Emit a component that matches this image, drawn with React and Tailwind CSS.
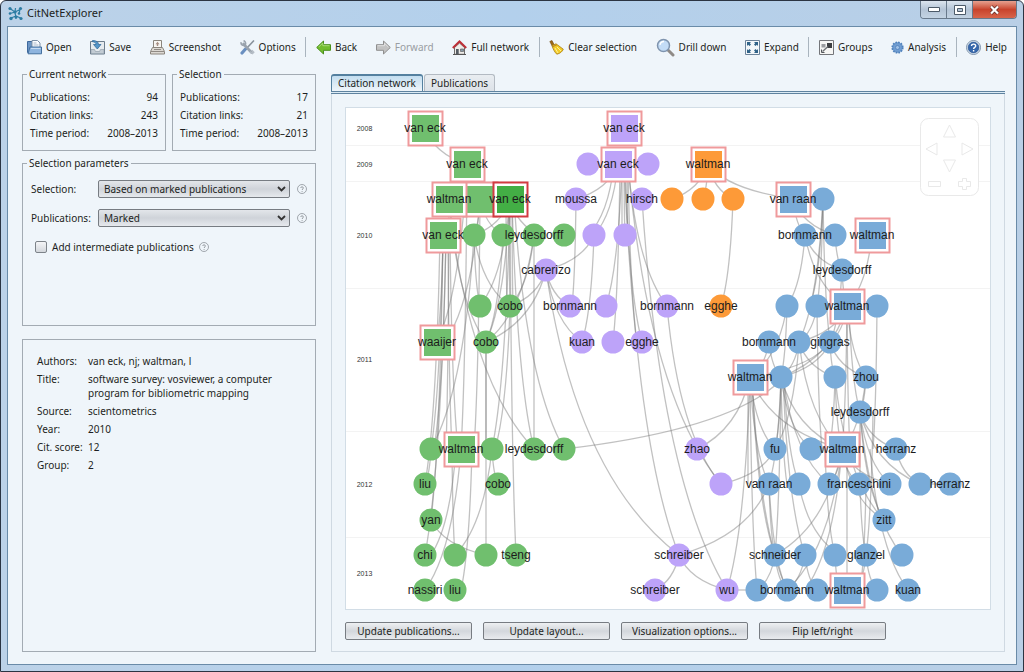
import { useState } from 'react'

const GREEN = '#70bf6e'
const PURPLE = '#bda3f9'
const ORANGE = '#fd9a38'
const BLUE = '#79abd8'

// x, y, color, label
const CIRCLES = [
  [474, 235, GREEN], [503, 235, GREEN], [534, 235, GREEN, 'leydesdorff'], [564, 235, GREEN],
  [480, 306, GREEN], [510, 306, GREEN, 'cobo'], [486, 342, GREEN, 'cobo'],
  [431, 449, GREEN], [492, 449, GREEN], [534, 449, GREEN, 'leydesdorff'], [564, 449, GREEN],
  [425, 484, GREEN, 'liu'], [498, 484, GREEN, 'cobo'], [431, 520, GREEN, 'yan'],
  [425, 555, GREEN, 'chi'], [455, 555, GREEN], [486, 555, GREEN], [516, 555, GREEN, 'tseng'],
  [425, 590, GREEN, 'nassiri'], [455, 590, GREEN, 'liu'],
  [588, 164, PURPLE], [648, 164, PURPLE], [576, 199, PURPLE, 'moussa'], [642, 199, PURPLE, 'hirsch'],
  [594, 235, PURPLE], [625, 235, PURPLE], [546, 270, PURPLE, 'cabrerizo'],
  [570, 306, PURPLE, 'bornmann'], [606, 306, PURPLE], [667, 306, PURPLE, 'bornmann'],
  [582, 342, PURPLE, 'kuan'], [613, 342, PURPLE], [642, 342, PURPLE, 'egghe'],
  [697, 449, PURPLE, 'zhao'], [721, 484, PURPLE], [679, 555, PURPLE, 'schreiber'],
  [655, 590, PURPLE, 'schreiber'], [727, 590, PURPLE, 'wu'],
  [672, 199, ORANGE], [703, 199, ORANGE], [733, 199, ORANGE], [721, 306, ORANGE, 'egghe'],
  [823, 199, BLUE], [805, 235, BLUE, 'bornmann'], [835, 235, BLUE], [842, 270, BLUE, 'leydesdorff'],
  [787, 306, BLUE], [817, 306, BLUE], [877, 306, BLUE],
  [769, 342, BLUE, 'bornmann'], [799, 342, BLUE], [830, 342, BLUE, 'gingras'],
  [781, 377, BLUE], [835, 377, BLUE], [866, 377, BLUE, 'zhou'], [860, 412, BLUE, 'leydesdorff'],
  [775, 449, BLUE, 'fu'], [811, 449, BLUE], [896, 449, BLUE, 'herranz'],
  [769, 484, BLUE, 'van raan'], [799, 484, BLUE], [829, 484, BLUE], [859, 484, BLUE, 'franceschini'],
  [890, 484, BLUE], [920, 484, BLUE], [950, 484, BLUE, 'herranz'], [884, 520, BLUE, 'zitt'],
  [775, 555, BLUE, 'schneider'], [805, 555, BLUE], [835, 555, BLUE], [866, 555, BLUE, 'glanzel'],
  [902, 555, BLUE], [757, 590, BLUE], [787, 590, BLUE, 'bornmann'], [817, 590, BLUE],
  [877, 590, BLUE], [908, 590, BLUE, 'kuan'],
]

// marked publications are drawn as framed squares
const SQUARES = [
  [425, 128, GREEN, 'van eck'], [467, 164, GREEN, 'van eck'], [480, 199, GREEN],
  [449, 199, GREEN, 'waltman'], [443, 235, GREEN, 'van eck'],
  [437, 342, GREEN, 'waaijer'], [461, 449, GREEN, 'waltman'],
  [624, 128, PURPLE, 'van eck'], [618, 164, PURPLE, 'van eck'],
  [708, 164, ORANGE, 'waltman'],
  [793, 199, BLUE, 'van raan'], [872, 235, BLUE, 'waltman'], [847, 306, BLUE, 'waltman'],
  [750, 377, BLUE, 'waltman'], [842, 449, BLUE, 'waltman'], [847, 590, BLUE, 'waltman'],
]

const EDGES = [
  [425, 128, 467, 164],
  [480, 199, 474, 235], [480, 199, 503, 235], [510, 199, 474, 235], [510, 199, 540, 235],
  [443, 235, 437, 342], [443, 235, 431, 449], [446, 235, 434, 449], [448, 235, 452, 449],
  [450, 235, 458, 449], [440, 235, 425, 484], [443, 235, 431, 520], [446, 235, 425, 555],
  [449, 199, 534, 449], [467, 164, 437, 342], [480, 199, 445, 342],
  [467, 164, 461, 449], [449, 199, 486, 342], [474, 235, 431, 449],
  [474, 235, 480, 306], [474, 235, 510, 306], [480, 199, 474, 449], [510, 199, 480, 306],
  [506, 199, 507, 306], [509, 199, 510, 306], [512, 199, 513, 306], [510, 199, 486, 342],
  [503, 235, 486, 342], [534, 235, 510, 306], [534, 235, 486, 342], [534, 235, 534, 449],
  [546, 270, 510, 306], [546, 270, 486, 342], [512, 199, 534, 449], [514, 199, 564, 449],
  [510, 199, 492, 449], [510, 199, 516, 555], [510, 306, 495, 449],
  [486, 342, 486, 449], [486, 342, 486, 555], [461, 449, 425, 590], [452, 449, 455, 555],
  [472, 449, 461, 590], [456, 449, 431, 555], [492, 449, 498, 484], [492, 449, 455, 555],
  [431, 449, 425, 484], [431, 520, 486, 555], [449, 199, 446, 449],
  [618, 164, 576, 199], [618, 164, 594, 235], [614, 164, 588, 235], [624, 164, 625, 235],
  [622, 164, 622, 235], [627, 164, 628, 235], [622, 164, 606, 306], [620, 164, 613, 342],
  [628, 164, 637, 342], [625, 164, 642, 342], [628, 164, 667, 306], [628, 164, 721, 484],
  [624, 164, 679, 555], [642, 199, 727, 590], [667, 306, 721, 484], [576, 199, 572, 306],
  [594, 235, 582, 342], [594, 235, 546, 270], [546, 270, 570, 306], [546, 270, 582, 342],
  [546, 270, 679, 555], [679, 555, 655, 590], [679, 555, 727, 590],
  [708, 164, 672, 199], [708, 164, 703, 199], [708, 164, 733, 199], [708, 164, 793, 199],
  [733, 199, 721, 306],
  [793, 199, 805, 235], [793, 199, 835, 235], [823, 199, 817, 306],
  [823, 199, 810, 306], [823, 199, 830, 342], [823, 199, 799, 342],
  [835, 235, 842, 270], [805, 235, 787, 306], [805, 235, 842, 270], [805, 235, 847, 306],
  [872, 235, 847, 306], [842, 270, 847, 306], [842, 270, 830, 342],
  [787, 306, 781, 377], [787, 306, 750, 377], [817, 306, 799, 342],
  [817, 306, 822, 449], [847, 306, 830, 342], [847, 306, 799, 342],
  [847, 306, 781, 377], [847, 306, 842, 449], [847, 306, 850, 449], [849, 306, 860, 412],
  [847, 306, 866, 377], [877, 306, 873, 449], [769, 342, 750, 377], [769, 342, 781, 377],
  [799, 342, 781, 377], [799, 342, 835, 377], [799, 342, 842, 449], [799, 342, 775, 449],
  [830, 342, 750, 377], [830, 342, 781, 377], [830, 342, 835, 377], [830, 342, 866, 377],
  [835, 377, 842, 449], [835, 377, 829, 449], [835, 377, 884, 520], [866, 377, 860, 412],
  [866, 377, 842, 449], [860, 412, 860, 484], [860, 412, 884, 520], [860, 412, 896, 449],
  [860, 412, 890, 484], [860, 412, 920, 484], [860, 412, 902, 555],
  [873, 412, 866, 555], [870, 449, 908, 590],
  [750, 377, 697, 449], [750, 377, 727, 590], [750, 377, 757, 590], [752, 377, 787, 590],
  [748, 377, 748, 484], [752, 377, 775, 555], [750, 377, 769, 484], [750, 377, 842, 449],
  [750, 377, 775, 449], [781, 377, 775, 449], [781, 377, 769, 484], [784, 377, 799, 484],
  [781, 377, 811, 449], [783, 377, 829, 484], [781, 377, 842, 449], [781, 377, 775, 555],
  [783, 377, 805, 555], [781, 377, 787, 484], [775, 449, 721, 484],
  [769, 484, 679, 555], [799, 484, 840, 555], [842, 449, 829, 484], [842, 449, 859, 484],
  [842, 449, 775, 555], [842, 449, 787, 590], [842, 449, 805, 590], [825, 449, 835, 555],
  [847, 449, 847, 590], [842, 449, 884, 520], [860, 484, 866, 555], [866, 484, 860, 590],
  [842, 449, 890, 484], [896, 449, 920, 484], [769, 484, 775, 555], [769, 484, 787, 590],
  [775, 555, 757, 590], [775, 555, 787, 590], [805, 555, 817, 590], [805, 555, 787, 590],
  [835, 555, 840, 590], [866, 555, 877, 590], [866, 555, 855, 590], [757, 590, 727, 590],
  [920, 484, 950, 484], [784, 377, 564, 449],
]

const YEARS = [[128, '2008'], [164, '2009'], [235, '2010'], [359, '2011'], [484, '2012'], [573, '2013']]

function edgePath([x1, y1, x2, y2]) {
  const dx = x2 - x1
  const dy = y2 - y1
  return `M${x1} ${y1}Q${x1 + dx * 0.22} ${y1 + dy * 0.72} ${x2} ${y2}`
}

function Node({ x, y, color, square, selected }) {
  if (!square) return <circle cx={x} cy={y} r="11.5" fill={color} />
  return (
    <g>
      <rect x={x - 16.5} y={y - 16.5} width="34" height="34" fill="#fff" stroke={selected ? '#d23b42' : '#ef9a9c'} strokeWidth="2" />
      <rect x={x - 13} y={y - 13} width="27" height="27" fill={color} />
    </g>
  )
}

function Label({ x, y, text }) {
  return (
    <text x={x} y={y + 4} textAnchor="middle" fontSize="12" fill="#1c1c1c">{text}</text>
  )
}

function CitationMap() {
  const nodes = [...CIRCLES, ...SQUARES, [510, 199, '#43ae45', 'van eck']]
  return (
    <svg viewBox="346 108 644 501" className="block w-full font-['Liberation_Sans',Arial,sans-serif]" role="img" aria-label="Citation network">
      {[145, 181, 288, 431, 537].map((y) => (
        <path key={y} d={`M346 ${y}.5H990`} stroke="#f3f3f3" />
      ))}
      {YEARS.map(([y, year]) => (
        <text key={year} x="364.5" y={y + 3} textAnchor="middle" fontSize="7" fill="#333">{year}</text>
      ))}
      <g fill="none" stroke="#777" strokeOpacity="0.46" strokeWidth="1.3">
        {EDGES.map((edge) => <path key={edge.join()} d={edgePath(edge)} />)}
      </g>
      {CIRCLES.map(([x, y, color]) => <Node key={`${x},${y}`} x={x} y={y} color={color} />)}
      {SQUARES.map(([x, y, color]) => <Node key={`${x},${y}`} x={x} y={y} color={color} square />)}
      <Node x={510} y={199} color="#43ae45" square selected />
      {nodes.filter((n) => n[3]).map(([x, y, , label]) => <Label key={`${x},${y}`} x={x} y={y} text={label} />)}
      <g fill="#fff" stroke="#e9e9e9">
        <rect x="920.5" y="118.5" width="58" height="77" rx="8" />
        <path d="M949.5 125l6 12h-12zM949.5 172l6-12h-12zM926 149l11-6v12zM973 149l-11-6v12z" />
        <path d="M928.5 181.5h12v5h-12zM962.5 178.5h4v3h4v5h-4v3h-4v-3h-4v-5h4z" />
      </g>
    </svg>
  )
}

/* ---- toolbar icons ---- */

function OpenIcon() {
  return (
    <svg width="15" height="15" viewBox="0 0 15 15">
      <path d="M.5 12.5V1.5h5l1 1.5h2v9.5z" fill="#6b94c4" stroke="#3d689c" />
      <path d="M5 .5h5.500l2.500 2.500v7H5z" fill="#fafcff" stroke="#7d8fa5" />
      <path d="M6.5 3h3M6.5 5h5" stroke="#aab8c8" />
      <path d="M1 13.800L3 7h11.500v6.800z" fill="#8eb4de" stroke="#44709f" />
      <path d="M4 8.500h9.500" stroke="#c8dcf2" />
    </svg>
  )
}

function SaveIcon() {
  return (
    <svg width="15" height="15" viewBox="0 0 15 15">
      <path d="M.5 1.5h14v12.500H.5z" fill="#e6ebef" stroke="#6d7d8c" />
      <path d="M1 9.500h3.500l1 2h4l1-2H14V13.500H1z" fill="#c3ccd4" stroke="#8a98a5" strokeWidth=".6" />
      <path d="M2.500.5C6 .5 8.500 1.800 8.500 4.500H11L7.300 9 3.500 4.500H6C6 2.800 4.800 1.900 2.500 1.700z" fill="#5596c8" stroke="#2b6496" strokeWidth=".7" />
    </svg>
  )
}

function ScreenshotIcon() {
  return (
    <svg width="15" height="15" viewBox="0 0 15 15">
      <path d="M3.500.5h8v8h-8z" fill="#f8f6f2" stroke="#8b857d" />
      <path d="M7.500 1.800l2 2.500H8.200V6H6.800V4.300H5.500z" fill="#a68e83" />
      <path d="M2.500 7.500h10l2 4v2.500H.5v-2.500z" fill="#ddd9d3" stroke="#8b857d" />
      <path d="M1 11.500h13M4 9.500h7" stroke="#908a84" />
    </svg>
  )
}

function OptionsIcon() {
  return (
    <svg width="15" height="15" viewBox="0 0 15 15" fill="none" strokeLinecap="round">
      <path d="M13.500 1L6 9" stroke="#8a939d" strokeWidth="1.700" />
      <path d="M5.500 9L2 13" stroke="#6a8fc0" strokeWidth="3.200" />
      <path d="M3.500 4L11.500 12.500" stroke="#9aa3ad" strokeWidth="2.600" />
      <path d="M1 2.800C1 5 3 6 4.800 5.200 6 4 5.800 2 4.200 1" stroke="#9aa3ad" strokeWidth="1.700" />
      <path d="M10.500 12l2 1.500 1.200-1.200L12 10.500" stroke="#b5bdc6" strokeWidth="1.500" />
    </svg>
  )
}

function BackIcon() {
  return (
    <svg width="15" height="15" viewBox="0 0 15 15">
      <path d="M.7 7.500L7.500 1v3.700h7v5.600h-7V14z" fill="#72bd2e" stroke="#4a8f1c" strokeLinejoin="round" />
      <path d="M2.800 7L6.800 3v2.700h6.700" fill="none" stroke="#aede7a" strokeWidth=".9" />
    </svg>
  )
}

function ForwardIcon() {
  return (
    <svg width="15" height="15" viewBox="0 0 15 15">
      <path d="M14.300 7.500L7.500 1v3.700h-7v5.600h7V14z" fill="#c2c2c2" stroke="#8f8f8f" strokeLinejoin="round" />
      <path d="M1.500 5.700h7V3.300l3.800 3.700" fill="none" stroke="#e4e4e4" strokeWidth=".9" />
    </svg>
  )
}

function HomeIcon() {
  return (
    <svg width="15" height="15" viewBox="0 0 15 15">
      <path d="M2.500 7.500l5-4.500 5 4.500v6.800h-10z" fill="#eeece8" stroke="#6b6b6b" />
      <path d="M.8 8l6.700-6.500L14.200 8" fill="none" stroke="#bd3038" strokeWidth="2" />
      <path d="M4 9h2.700v5H4z" fill="#555c63" />
      <path d="M8.500 9h3v2.500h-3z" fill="#8799a8" stroke="#555" strokeWidth=".6" />
      <path d="M1 14.500h13" stroke="#555" />
    </svg>
  )
}

function BroomIcon() {
  return (
    <svg width="15" height="15" viewBox="0 0 15 15">
      <path d="M.8 1.500L3 .5l2.500 5-2 1.200z" fill="#a06b18" stroke="#6d4813" strokeWidth=".6" />
      <path d="M3 5.500L7 3.800l7.300 5.400c-1 2.500-3.300 4.300-6.500 5C5.500 12 4 9 3 5.500z" fill="#f3cd26" stroke="#a87b12" strokeWidth=".8" />
      <path d="M3.500 6.800l4.300-2" stroke="#b6892a" strokeWidth="1.200" />
      <path d="M6 8l3 5M8 7l4 4" stroke="#fff09a" strokeWidth="1" />
    </svg>
  )
}

function DrillIcon() {
  return (
    <svg width="19" height="19" viewBox="0 0 19 19">
      <path d="M12 12l5 5" stroke="#8f8a86" strokeWidth="3" strokeLinecap="round" />
      <circle cx="7.500" cy="7.500" r="6" fill="#c3dcf6" stroke="#7f94ae" strokeWidth="1.500" />
      <path d="M4 7a4 4 0 014-3.500" fill="none" stroke="#fff" strokeWidth="1.300" />
    </svg>
  )
}

function ExpandIcon() {
  return (
    <svg width="15" height="15" viewBox="0 0 15 15">
      <path d="M.5.5h14v14H.5z" fill="#f3f7fa" stroke="#6c839a" />
      <path d="M2 2h4L4.800 3.200 6 4.500 4.500 6 3.200 4.800 2 6zM13 2v4l-1.200-1.200L10.500 6 9 4.500l1.200-1.300L9 2zM2 13V9l1.200 1.200L4.500 9 6 10.500l-1.200 1.300L6 13zM13 13H9l1.200-1.200L9 10.500 10.500 9l1.300 1.200L13 9z" fill="#2f6288" />
    </svg>
  )
}

function GroupsIcon() {
  return (
    <svg width="15" height="15" viewBox="0 0 15 15">
      <path d="M.5.5h14v14H.5z" fill="#f6f6f4" stroke="#74767a" />
      <path d="M8 3h5v5H8z" fill="#3d3f42" />
      <path d="M2.500 4h4v3.500h-4z" fill="#9b9da0" />
      <path d="M3.500 11.500L9 6.500" stroke="#6d7074" strokeWidth="1.300" />
      <path d="M2.500 9.500v3h3" fill="none" stroke="#55585c" />
    </svg>
  )
}

function GearIcon() {
  return (
    <svg width="13" height="13" viewBox="0 0 13 13">
      <circle cx="6.500" cy="6.500" r="5.300" fill="none" stroke="#4c80bd" strokeWidth="1.600" strokeDasharray="1.700 1.070" />
      <circle cx="6.500" cy="6.500" r="4.800" fill="#6f9dd2" stroke="#4c7db8" strokeWidth=".7" />
      <circle cx="6.500" cy="6.500" r="2" fill="#9fc1e6" stroke="#4c7db8" strokeWidth=".7" />
    </svg>
  )
}

function HelpIcon() {
  return (
    <svg width="15" height="15" viewBox="0 0 15 15">
      <circle cx="7.500" cy="7.500" r="7" fill="#e4edf6" stroke="#7d93ab" />
      <circle cx="7.500" cy="7.500" r="5.400" fill="#3567ac" stroke="#234c86" strokeWidth=".6" />
      <path d="M5.500 6c0-2.600 4.200-2.500 4.200 0 0 1.500-2.100 1.400-2.100 3M7.600 10v1.400" fill="none" stroke="#fff" strokeWidth="1.400" />
    </svg>
  )
}

function AppLogo() {
  return (
    <svg width="15" height="15" viewBox="0 0 15 15">
      <path d="M2 2.500L7 6l-5 1.500M7 6l.5-4M7 6l1 7M3 12l5-2M8 10l4.500 2M7 6l5-2.500M12 3.500l-1 4" fill="none" stroke="#2f7fa5" strokeWidth="1.200" />
      <g fill="#2c7ba2">
        <circle cx="2" cy="2.500" r="1.600" /><circle cx="2" cy="7.500" r="1.300" /><circle cx="3" cy="12.500" r="1.700" />
        <circle cx="7" cy="6" r="1.600" /><circle cx="12.500" cy="2.500" r="1.600" /><circle cx="11" cy="7.500" r="1.300" />
        <circle cx="8" cy="11" r="1.500" /><circle cx="13" cy="12.500" r="1.600" />
      </g>
    </svg>
  )
}

function HintIcon() {
  return (
    <svg width="10" height="10" viewBox="0 0 10 10" fill="none" stroke="#8d9399">
      <circle cx="5" cy="5" r="4.500" strokeWidth=".8" />
      <path d="M3.700 4c0-1.600 2.700-1.600 2.700 0 0 .9-1.300.9-1.300 2M5.100 7v.9" strokeWidth=".9" />
    </svg>
  )
}

const TOOLBAR = [
  ['Open', OpenIcon], ['Save', SaveIcon], ['Screenshot', ScreenshotIcon], ['Options', OptionsIcon], null,
  ['Back', BackIcon], ['Forward', ForwardIcon], ['Full network', HomeIcon], null,
  ['Clear selection', BroomIcon], ['Drill down', DrillIcon], ['Expand', ExpandIcon], null,
  ['Groups', GroupsIcon], ['Analysis', GearIcon], null,
  ['Help', HelpIcon],
]

function Toolbar() {
  return (
    <div className="flex h-10 items-center justify-between pl-[10px]">
      {TOOLBAR.map((item, i) => {
        if (!item) return <div key={i} className="h-5 w-px bg-[#a9b4be]" />
        const [label, Icon] = item
        return (
          <button
            key={label}
            type="button"
            disabled={label === 'Forward'}
            className="flex items-center gap-1 px-[9px] whitespace-nowrap disabled:text-[#9a9ea3]"
          >
            <Icon />
            {label}
          </button>
        )
      })}
    </div>
  )
}

function StatsBox({ title, publications, links }) {
  const rows = [['Publications:', publications], ['Citation links:', links], ['Time period:', '2008–2013']]
  return (
    <fieldset className="min-w-0 flex-1 border border-[#a3abb3] px-[7px] pt-[7px] pb-2">
      <legend className="-ml-[3px] px-0.5 leading-[14px]">{title}</legend>
      <dl>
        {rows.map(([name, value]) => (
          <div key={name} className="flex justify-between leading-[18px] whitespace-nowrap">
            <dt>{name}</dt>
            <dd>{value}</dd>
          </div>
        ))}
      </dl>
    </fieldset>
  )
}

function SelectRow({ id, label, options }) {
  return (
    <div className="flex items-center">
      <label htmlFor={id} className="w-[67px] shrink-0">{label}</label>
      <div className="relative flex-1">
        <select
          id={id}
          className="block h-[18px] w-full appearance-none rounded-[2px] border border-[#777c82] bg-linear-to-b from-[#e3e6ea] via-[#cfd3d9] to-[#e6e9ed] pl-[5px] leading-4"
        >
          {options.map((o) => <option key={o}>{o}</option>)}
        </select>
        <svg className="pointer-events-none absolute top-1.5 right-1" width="9" height="6" viewBox="0 0 9 6">
          <path d="M1 1l3.500 3.500L8 1" fill="none" stroke="#333" strokeWidth="1.800" />
        </svg>
      </div>
      <span className="ml-[7px]"><HintIcon /></span>
    </div>
  )
}

function SelectionParameters() {
  const [intermediate, setIntermediate] = useState(false)
  return (
    <fieldset className="mt-[5px] h-[170px] border border-[#a3abb3] px-2 pt-2.5">
      <legend className="-ml-1 px-0.5 leading-[14px]">Selection parameters</legend>
      <div className="flex flex-col gap-[11px]">
        <SelectRow id="selection" label="Selection:" options={['Based on marked publications']} />
        <SelectRow id="publications" label="Publications:" options={['Marked']} />
        <label className="flex h-[18px] items-center pl-1">
          <input
            type="checkbox"
            checked={intermediate}
            onChange={(e) => setIntermediate(e.target.checked)}
            className="mr-[5px] h-3 w-3 appearance-none rounded-[2px] border border-[#7d8389] bg-linear-to-b from-[#f4f5f7] to-[#d3d7dc] checked:bg-[#6f9dd2]"
          />
          Add intermediate publications
          <span className="ml-[5px]"><HintIcon /></span>
        </label>
      </div>
    </fieldset>
  )
}

const DETAILS = [
  ['Authors:', 'van eck, nj; waltman, l'],
  ['Title:', 'software survey: vosviewer, a computer program for bibliometric mapping'],
  ['Source:', 'scientometrics'],
  ['Year:', '2010'],
  ['Cit. score:', '12'],
  ['Group:', '2'],
]

function PublicationDetails() {
  return (
    <div className="mt-[13px] flex-1 border border-[#a3abb3] px-[14px] pt-3.5">
      <dl className="grid grid-cols-[51px_1fr] gap-y-1 leading-[14px]">
        {DETAILS.map(([name, value]) => (
          <div key={name} className="contents">
            <dt className="whitespace-nowrap">{name}</dt>
            <dd className="max-w-[200px]">{value}</dd>
          </div>
        ))}
      </dl>
    </div>
  )
}

const ACTIONS = ['Update publications...', 'Update layout...', 'Visualization options...', 'Flip left/right']

function NetworkPanel() {
  return (
    <section className="flex min-w-0 flex-1 flex-col pt-[7px]">
      <div className="flex items-end gap-px" role="tablist">
        <button type="button" role="tab" aria-selected="true" className="h-[17px] rounded-t-[3px] border border-b-0 border-t-2 border-[#54809f] bg-linear-to-b from-[#c3def0] to-[#eff5fa] px-[6px] leading-[15px] whitespace-nowrap">
          Citation network
        </button>
        <button type="button" role="tab" aria-selected="false" className="h-[17px] rounded-t-[3px] border border-b-0 border-[#b3bac2] bg-linear-to-b from-[#e9edf1] to-[#dde2e8] px-[6px] leading-[15px] whitespace-nowrap">
          Publications
        </button>
      </div>
      <div className="h-[3px] border-y border-[#5f83a0] bg-[#dcebf5]" />
      <div className="flex-1 border border-t-0 border-[#cfd9e2] px-[13px] pt-[13px] pb-[11px]">
        <div className="border border-[#d2dde6] bg-white">
          <CitationMap />
        </div>
        <div className="mt-3 flex gap-[11px]">
          {ACTIONS.map((label) => (
            <button
              key={label}
              type="button"
              className="h-[18px] w-[127px] rounded-[2px] border border-[#777c82] bg-linear-to-b from-[#eef0f2] via-[#d3d7dc] to-[#e8ebee] leading-4 whitespace-nowrap"
            >
              {label}
            </button>
          ))}
        </div>
      </div>
    </section>
  )
}

function TitleBar() {
  return (
    <header className="flex h-[25px] items-start justify-between">
      <div className="flex h-full items-center gap-1 pl-px text-[11px]">
        <AppLogo />
        <h1>CitNetExplorer</h1>
      </div>
      <div className="flex h-[18px] overflow-hidden rounded-b-[4px] border border-t-0 border-[#68798b]">
        <button type="button" aria-label="Minimize" className="flex w-[26px] items-center justify-center border-r border-[#68798b] bg-linear-to-b from-[#dbe4ee] via-[#b4c4d6] to-[#c3d3e3]">
          <svg width="12" height="5" viewBox="0 0 12 5"><path d="M.5.5h11v4H.5z" fill="#fff" stroke="#4c5a69" /></svg>
        </button>
        <button type="button" aria-label="Maximize" className="flex w-[26px] items-center justify-center border-r border-[#68798b] bg-linear-to-b from-[#dbe4ee] via-[#b4c4d6] to-[#c3d3e3]">
          <svg width="12" height="10" viewBox="0 0 12 10">
            <path d="M.5.5h11v9H.5z" fill="#fff" stroke="#4c5a69" />
            <path d="M3.500 3.500h5v3h-5z" fill="#b4c4d6" stroke="#4c5a69" />
          </svg>
        </button>
        <button type="button" aria-label="Close" className="flex w-[43px] items-center justify-center bg-linear-to-b from-[#e5a08f] via-[#c8432c] to-[#d8644a]">
          <svg width="11" height="10" viewBox="0 0 11 10">
            <path d="M2 1.500l7 7M9 1.500l-7 7" stroke="#5b2a25" strokeWidth="3.600" />
            <path d="M2 1.500l7 7M9 1.500l-7 7" stroke="#fff" strokeWidth="2.200" />
          </svg>
        </button>
      </div>
    </header>
  )
}

export default function App() {
  return (
    <div className="flex min-h-screen flex-col rounded-t-[6px] border border-[#2b3442] bg-linear-to-r from-[#bcd2e8] via-[#b3d0ec] to-[#b9cfe6] px-1.5 pb-1.5 font-['Noto_Sans','Open_Sans',sans-serif] text-[10px] text-[#1d1f22]">
      <TitleBar />
      <div className="flex flex-1 flex-col border border-[#6a8ba8] bg-[#eff5fa]">
        <Toolbar />
        <main className="flex flex-1 gap-[15px] pr-[11px] pb-3 pl-3.5">
          <aside className="flex w-[294px] shrink-0 flex-col">
            <div className="flex gap-1.5">
              <StatsBox title="Current network" publications="94" links="243" />
              <StatsBox title="Selection" publications="17" links="21" />
            </div>
            <SelectionParameters />
            <PublicationDetails />
          </aside>
          <NetworkPanel />
        </main>
      </div>
    </div>
  )
}
